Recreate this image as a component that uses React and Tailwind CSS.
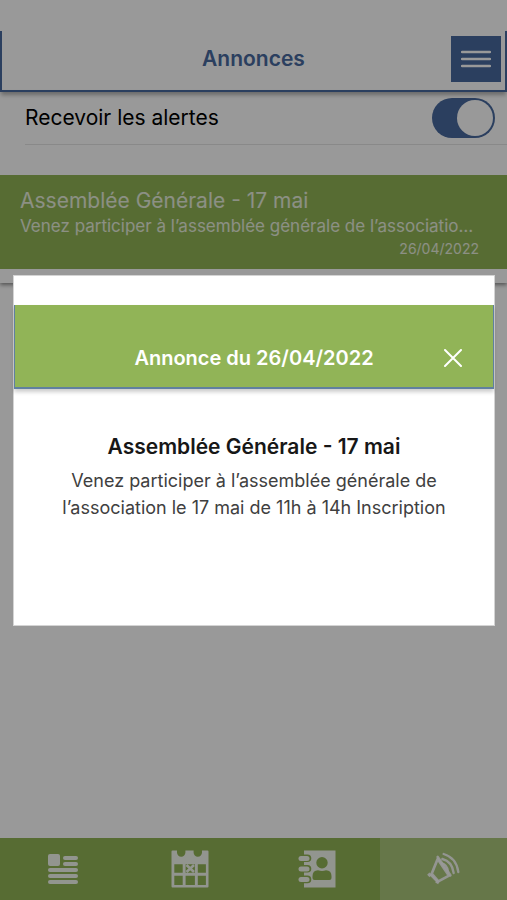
import { useState } from 'react'

const ANNOUNCEMENTS = [
  {
    id: 1,
    title: 'Assemblée Générale - 17 mai',
    body: 'Venez participer à l’assemblée générale de l’association le 17 mai de 11h à 14h Inscription',
    date: '26/04/2022',
  },
]

function NewsIcon() {
  return (
    <svg viewBox="0 0 30 30" className="h-[30px] w-[30px]" fill="currentColor" aria-hidden="true">
      <rect x="0" y="0" width="12" height="12" rx="2" />
      <rect x="15" y="2" width="15" height="4" rx="2" />
      <rect x="15" y="8" width="15" height="4" rx="2" />
      <rect x="0" y="14" width="30" height="4" rx="2" />
      <rect x="0" y="20" width="30" height="4" rx="2" />
      <rect x="0" y="26" width="30" height="4" rx="2" />
    </svg>
  )
}

function CalendarIcon() {
  return (
    <svg viewBox="0 0 38 38" className="h-[38px] w-[38px]" fill="currentColor" aria-hidden="true">
      <path
        fillRule="evenodd"
        d="M1.500 .5H6v2a4.200 4.200 0 0 0 8.400 0v-2h8.200v2a4.200 4.200 0 0 0 8.400 0v-2h5.500q1 0 1 1v35q0 1-1 1h-35q-1 0-1-1v-35q0-1 1-1ZM3.300 14.300v8.400h8.400v-8.400ZM14.600 14.300v8.400h9.300v-8.400ZM26.800 14.300v8.400h8.100v-8.400ZM3.300 25.700v9.200h8.400v-9.200ZM14.600 25.700v9.200h9.300v-9.200ZM26.800 25.700v9.200h8.100v-9.200Z"
      />
      <path d="m15.500 15 7.500 7m0-7-7.500 7" stroke="currentColor" strokeWidth="2.600" />
    </svg>
  )
}

function ContactsIcon() {
  return (
    <svg viewBox="0 0 38 38" className="h-[38px] w-[38px]" fill="currentColor" aria-hidden="true">
      <path
        fillRule="evenodd"
        d="M6 .5h31.500v37H6v-4.300h3.500a3.800 3.800 0 0 0 0-7.600H6v-3h3.500a3.800 3.800 0 0 0 0-7.600H6v-3h3.500a3.800 3.800 0 0 0 0-7.600H6ZM24 7a5.700 5.700 0 1 0 0 11.400A5.700 5.700 0 0 0 24 7ZM20 20.200q-5.500 0-5.500 6V28q0 2 2 2h15q2 0 2-2v-1.800q0-6-5.500-6-4 1.400-8 0Z"
      />
      <rect x="0.500" y="6" width="11" height="5" rx="2.500" />
      <rect x="0.500" y="16.500" width="11" height="5" rx="2.500" />
      <rect x="0.500" y="27" width="11" height="5" rx="2.500" />
    </svg>
  )
}

function MegaphoneIcon() {
  return (
    <svg viewBox="0 0 114 120" className="h-10 w-[38px]" fill="none" stroke="currentColor" aria-hidden="true">
      <path d="M38 30 20 74 40 97 72 80Z" strokeWidth="8" strokeLinejoin="round" />
      <path d="m38 24 38 55" strokeWidth="8" strokeLinecap="round" />
      <path d="m17 74-7 7M40 94l-5 9" strokeWidth="10" />
      <path d="m17 77 22 22" strokeWidth="8" />
      <path d="M48 42q21 5 22 28" strokeWidth="6" />
      <path d="M52 30q29 7 34 42" strokeWidth="7" strokeLinecap="round" />
      <path d="M56 15q38 11 44 54" strokeWidth="7" strokeLinecap="round" />
    </svg>
  )
}

const TABS = [
  { key: 'news', label: 'Actualités', Icon: NewsIcon },
  { key: 'calendar', label: 'Agenda', Icon: CalendarIcon },
  { key: 'contacts', label: 'Contacts', Icon: ContactsIcon },
  { key: 'announcements', label: 'Annonces', Icon: MegaphoneIcon },
]

function AnnouncementDialog({ announcement, onClose }) {
  return (
    <div className="fixed inset-0 z-20 flex items-center bg-black/40 pr-3 pl-[13px]">
      <section
        role="dialog"
        aria-modal="true"
        aria-labelledby="dialog-title"
        className="w-full border border-neutral-300 bg-white pt-[29px] pb-[104px]"
      >
        <header className="grid grid-cols-[48px_1fr_48px] items-center border-x border-b-2 border-[#6080a0] bg-[#91b457] px-4 pt-8 pb-2 text-white shadow-[0_3px_4px_rgba(0,0,0,0.2)]">
          <h2 id="dialog-title" className="col-start-2 text-center text-xl font-semibold">
            Annonce du {announcement.date}
          </h2>
          <button type="button" aria-label="Fermer" onClick={onClose} className="flex h-[42px] items-center justify-center">
            <svg viewBox="0 0 18 18" className="h-[18px] w-[18px]" fill="none" stroke="currentColor" strokeWidth="2" aria-hidden="true">
              <path d="m1 1 16 16M17 1 1 17" strokeLinecap="round" />
            </svg>
          </button>
        </header>
        <div className="px-8 pt-11 text-center">
          <h3 className="text-[21px] leading-7 font-semibold text-neutral-900">{announcement.title}</h3>
          <p className="mt-[6px] text-lg leading-[27px] text-neutral-700">{announcement.body}</p>
        </div>
      </section>
    </div>
  )
}

export default function App() {
  const [alerts, setAlerts] = useState(true)
  const [activeTab, setActiveTab] = useState('announcements')
  const [selected, setSelected] = useState(ANNOUNCEMENTS[0])

  return (
    <div className="flex min-h-screen flex-col bg-white font-['Inter',sans-serif]">
      <div className="relative z-10 pt-[31px]">
        <header className="grid grid-cols-[50px_1fr_50px] items-center border-x-2 border-b-2 border-[#48699e] px-1 pt-[5px] pb-2 shadow-[0_4px_4px_-1px_rgba(0,0,0,0.3)]">
          <h1 className="col-start-2 text-center text-[21px] font-semibold text-[#48699e]">Annonces</h1>
          <button type="button" aria-label="Menu" className="flex h-[46px] items-center justify-center bg-[#48699e] text-white">
            <svg viewBox="0 0 30 18" className="h-[18px] w-[30px]" fill="none" stroke="currentColor" strokeWidth="2.500" aria-hidden="true">
              <path d="M1 2h28M1 9h28M1 16h28" strokeLinecap="round" />
            </svg>
          </button>
        </header>
      </div>

      <main className="flex-1">
        <div className="pb-[14px] shadow-[0_2px_4px_rgba(0,0,0,0.45)]">
          <div className="mb-[30px] ml-[25px] flex h-[53px] items-center justify-between border-b border-neutral-200 pr-3">
            <label htmlFor="alerts" className="text-[21px] text-black">Recevoir les alertes</label>
            <input
              id="alerts"
              type="checkbox"
              role="switch"
              checked={alerts}
              onChange={(e) => setAlerts(e.target.checked)}
              className="flex h-10 w-[63px] appearance-none items-center rounded-full bg-neutral-300 p-[2px] before:h-9 before:w-9 before:rounded-full before:bg-white checked:justify-end checked:bg-[#48699e]"
            />
          </div>

          {ANNOUNCEMENTS.map((item) => (
            <button
              key={item.id}
              type="button"
              onClick={() => setSelected(item)}
              className="block w-full bg-[#91b455] px-5 pt-3 pb-[10px] text-left text-white/80"
            >
              <span className="block truncate text-[21px] leading-[27px]">{item.title}</span>
              <span className="mr-3 block truncate text-[17px] leading-6">{item.body}</span>
              <span className="mr-2 block text-right text-sm leading-[21px]">{item.date}</span>
            </button>
          ))}
        </div>
      </main>

      <nav className="grid grid-cols-4 bg-[#91b455] text-white/90">
        {TABS.map(({ key, label, Icon }) => (
          <button
            key={key}
            type="button"
            aria-label={label}
            onClick={() => setActiveTab(key)}
            className={`flex h-[62px] items-center justify-center ${activeTab === key ? 'bg-[#aac67b]' : ''}`}
          >
            <Icon />
          </button>
        ))}
      </nav>

      {selected && <AnnouncementDialog announcement={selected} onClose={() => setSelected(null)} />}
    </div>
  )
}
